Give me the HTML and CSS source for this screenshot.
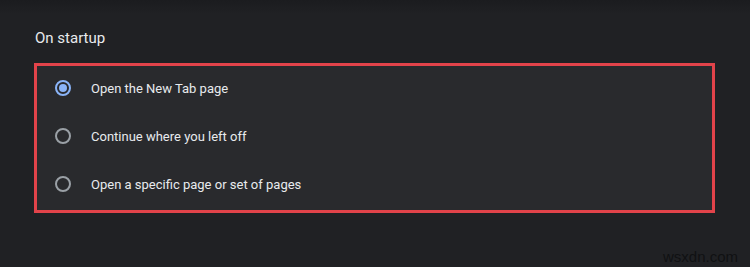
FILE: index.html
```html
<!DOCTYPE html>
<html lang="en-us">
<head>
    <meta charset="utf-8">
    <title>Settings - On startup</title>
    <meta name="viewport" content="width=device-width, initial-scale=1.0">
    <link rel="stylesheet" href="styles.css">
</head>
<body>
    <div id="startup">
        <h2 class="heading">On startup</h2>
        <div class="options">
            <label class="option">
                <span class="radio checked"></span>
                <span class="label">Open the New Tab page</span>
            </label>
            <label class="option">
                <span class="radio"></span>
                <span class="label">Continue where you left off</span>
            </label>
            <label class="option">
                <span class="radio"></span>
                <span class="label">Open a specific page or set of pages</span>
            </label>
        </div>
    </div>
    <div class="watermark">wsxdn.com</div>
</body>
</html>
```

FILE: styles.css
```css
body {
    font-family: Roboto, "Liberation Sans", sans-serif;
    margin: 0;
    padding: 0;
    height: 267px;
    overflow: hidden;
    background: linear-gradient(#1b1c1f 0, #202124 14px);
    background-color: #202124;
    color: #e8eaed;
}
#startup {
    padding: 29px 35px 0 34px;
}
.heading {
    margin: 0 0 15px 1px;
    font-size: 15px;
    font-weight: 400;
    line-height: 19px;
    color: #e8eaed;
}
.options {
    width: 675px;
    border: 3px solid #e2434a;
    background-color: #292a2d;
}
.option {
    display: flex;
    align-items: center;
    height: 44px;
    padding-bottom: 4px;
    font-size: 13px;
}
.radio {
    box-sizing: border-box;
    width: 16px;
    height: 16px;
    margin-left: 18px;
    margin-right: 20px;
    border: 2px solid #9aa0a6;
    border-radius: 50%;
    position: relative;
}
.radio.checked {
    border-color: #8ab4f8;
}
.radio.checked::after {
    content: "";
    position: absolute;
    left: 2px;
    top: 2px;
    width: 8px;
    height: 8px;
    border-radius: 50%;
    background-color: #8ab4f8;
}
.label {
    color: #e8eaed;
}
.watermark {
    position: absolute;
    right: 12px;
    bottom: 2px;
    font-family: "Liberation Sans", Arial, sans-serif;
    font-size: 15px;
    color: #101113;
}
```
